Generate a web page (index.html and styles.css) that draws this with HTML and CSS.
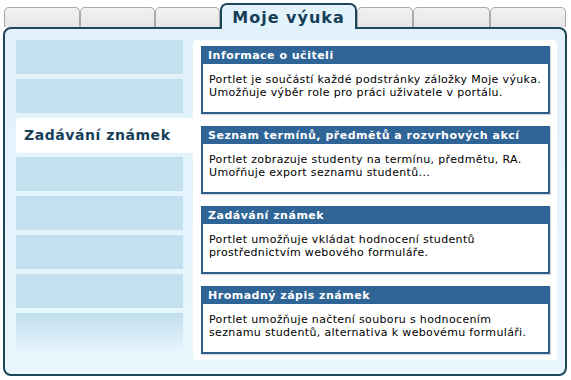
FILE: index.html
```html
<!DOCTYPE html>
<html lang="cs">
<head>
<meta charset="utf-8">
<title>Moje výuka</title>
<link rel="stylesheet" href="styles.css">
</head>
<body>
<div class="page">
  <div class="tabs">
    <div class="tab w76"></div>
    <div class="tab w75"></div>
    <div class="tab w65"></div>
    <div class="tab active">Moje výuka</div>
    <div class="tab w56"></div>
    <div class="tab w77"></div>
    <div class="tab w76"></div>
  </div>
  <div class="panel">
    <div class="menu">
      <div class="item"></div>
      <div class="item"></div>
      <div class="item selected">Zadávání známek</div>
      <div class="item"></div>
      <div class="item"></div>
      <div class="item"></div>
      <div class="item"></div>
      <div class="item last"></div>
    </div>
    <div class="content">
      <div class="portlet">
        <div class="ph">Informace o učiteli</div>
        <div class="pb">Portlet je součástí každé podstránky záložky Moje výuka.<br>Umožňuje výběr role pro práci uživatele v portálu.</div>
      </div>
      <div class="portlet">
        <div class="ph">Seznam termínů, předmětů a rozvrhových akcí</div>
        <div class="pb">Portlet zobrazuje studenty na termínu, předmětu, RA.<br>Umořňuje export seznamu studentů...</div>
      </div>
      <div class="portlet">
        <div class="ph">Zadávání známek</div>
        <div class="pb">Portlet umožňuje vkládat hodnocení studentů<br>prostřednictvím webového formuláře.</div>
      </div>
      <div class="portlet">
        <div class="ph">Hromadný zápis známek</div>
        <div class="pb">Portlet umožňuje načtení souboru s hodnocením<br>seznamu studentů, alternativa k webovému formuláři.</div>
      </div>
    </div>
  </div>
</div>
</body>
</html>
```
FILE: styles.css
```css
html, body {
  margin: 0;
  padding: 0;
  background: #ffffff;
}
body {
  font-family: "DejaVu Sans", Verdana, sans-serif;
  font-size: 11px;
  color: #000;
}
.page {
  padding: 3px 4px 0 3px;
  width: 564px;
}
.tabs {
  display: flex;
  align-items: flex-end;
  height: 24px;
  padding-left: 1px;
  position: relative;
  z-index: 2;
}
.tab {
  box-sizing: border-box;
  height: 20px;
  border: 1px solid #a9a9a9;
  border-bottom: none;
  border-radius: 5px 5px 0 0;
  background: linear-gradient(#f2f2f2, #e6e6e6);
}
.w76 { width: 76px; }
.w75 { width: 75px; }
.w65 { width: 65px; }
.w56 { width: 56px; }
.w77 { width: 77px; }
.tab.active {
  width: 137px;
  height: 26px;
  margin-bottom: -2px;
  border: 2px solid #1d4759;
  border-bottom: none;
  border-radius: 7px 7px 0 0;
  background: #e3f3fb;
  color: #163e58;
  font-size: 16px;
  font-weight: bold;
  letter-spacing: 1px;
  text-align: center;
  line-height: 25px;
}
.panel {
  box-sizing: border-box;
  width: 564px;
  height: 349px;
  border: 2px solid #1d4759;
  border-radius: 8px;
  background: linear-gradient(#e1f2fb, #e8f6fd);
  display: flex;
  padding: 11px 8px 14px 11px;
  position: relative;
  z-index: 1;
}
.menu {
  width: 177px;
  display: flex;
  flex-direction: column;
  gap: 5px;
}
.item {
  width: 167px;
  height: 34px;
  background: #c2e0ee;
}
.item.selected {
  width: 177px;
  height: 35px;
  margin-bottom: -1px;
  background: #ffffff;
  border-radius: 4px 0 0 4px;
  box-sizing: border-box;
  padding-left: 8px;
  font-size: 14px;
  font-weight: bold;
  letter-spacing: 0.55px;
  color: #163e58;
  line-height: 35px;
}
.item.last {
  height: 37px;
  background: linear-gradient(#c2e0ee, #e4f3fb);
}
.content {
  flex: 1;
  background: #ffffff;
  border-radius: 4px;
  padding: 6px 7px 6px 8px;
  display: flex;
  flex-direction: column;
  gap: 12px;
}
.portlet {
  box-sizing: border-box;
  height: 68px;
  border: 2px solid #2d5d89;
  border-top: none;
  display: flex;
  flex-direction: column;
  box-shadow: 1px 1px 1px rgba(0, 0, 0, 0.15);
}
.ph {
  height: 18px;
  margin: 0 -2px;
  padding-left: 7px;
  background: #2f6496;
  color: #ffffff;
  font-weight: bold;
  line-height: 19px;
  letter-spacing: 0.5px;
}
.pb {
  flex: 1;
  padding: 9px 6px 0 6px;
  line-height: 13px;
  letter-spacing: 0.35px;
  background: #ffffff;
}
```
